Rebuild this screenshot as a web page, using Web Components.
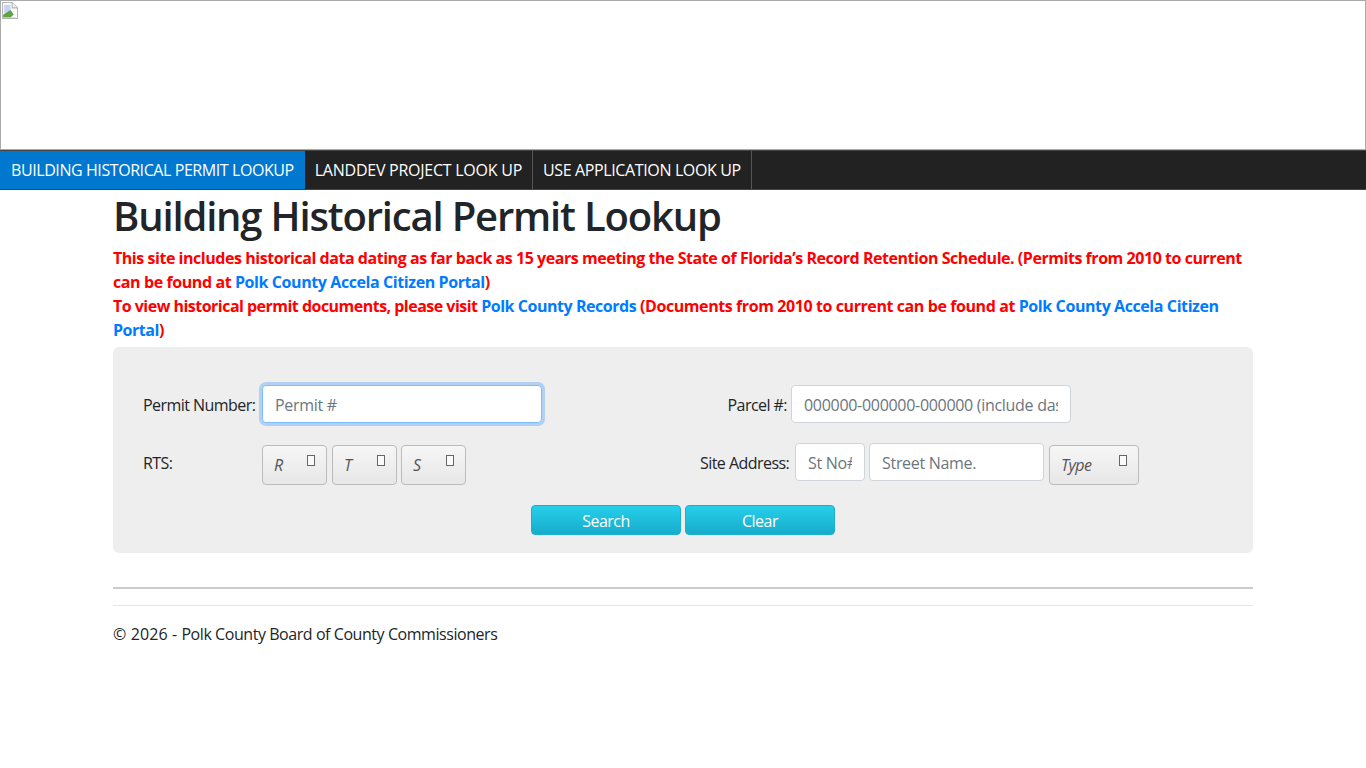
<!DOCTYPE html>
<html lang="en">
<head>
<meta charset="utf-8">
<title>Building Historical Permit Lookup</title>
<style>
    html, body { margin: 0; padding: 0; background: #fff; }
    body { font-family: "Open Sans", "Noto Sans", sans-serif; font-size: 16px; color: #212529; }
</style>
</head>
<body>
<site-banner></site-banner>
<site-nav>
    <nav-link active>BUILDING HISTORICAL PERMIT LOOKUP</nav-link>
    <nav-link style="letter-spacing:-0.25px">LANDDEV PROJECT LOOK UP</nav-link>
    <nav-link style="letter-spacing:-0.37px">USE APPLICATION LOOK UP</nav-link>
</site-nav>
<page-body>
    <h-title slot="title">Building Historical Permit Lookup</h-title>
    <notice-text slot="notice"></notice-text>
    <permit-form slot="form"></permit-form>
    <site-footer slot="footer"></site-footer>
</page-body>

<script>
class SiteBanner extends HTMLElement {
    connectedCallback() {
        this.attachShadow({ mode: 'open' });
        this.shadowRoot.innerHTML = `
            <style>
                :host { display: block; height: 150px; box-sizing: border-box; border: 1px solid #aaa; }
                svg { display: block; margin: 1px 0 0 0; }
            </style>
            <svg width="17" height="17" viewBox="0 0 16 16">
                <path d="M1.5 .5H10.5L15.5 5.5V15.5H1.5Z" fill="#fff" stroke="#b4b4b4"/>
                <path d="M10.5 .5V5.5H15.5" fill="#eee" stroke="#b4b4b4"/>
                <path d="M3 2.5H9V9L3 11Z" fill="#c5d4f3"/>
                <path d="M2 14.5V12L9 7.5L14 14.5Z" fill="#5ea548"/>
                <path d="M9 14.5L15 9V14.5Z" fill="#fff"/>
            </svg>
        `;
    }
}

class SiteNav extends HTMLElement {
    connectedCallback() {
        this.attachShadow({ mode: 'open' });
        this.shadowRoot.innerHTML = `
            <style>
                :host { display: flex; height: 40px; box-sizing: border-box; background: #222; border-top: 1px solid #444; border-bottom: 1px solid #444; }
            </style>
            <slot></slot>
        `;
    }
}

class NavLink extends HTMLElement {
    connectedCallback() {
        this.attachShadow({ mode: 'open' });
        this.shadowRoot.innerHTML = `
            <style>
                :host { display: flex; align-items: center; height: 38px; padding: 0 10px; color: #fff; border-right: 1px solid #555; font-size: 16px; white-space: nowrap; cursor: pointer; }
                :host([active]) { background: #0078d0; border-right: 0; padding: 0 11px; letter-spacing: -0.42px; }
            </style>
            <slot></slot>
        `;
    }
}

class PageBody extends HTMLElement {
    connectedCallback() {
        this.attachShadow({ mode: 'open' });
        this.shadowRoot.innerHTML = `
            <style>
                :host { display: block; width: 1140px; margin: 0 auto; }
            </style>
            <slot name="title"></slot>
            <slot name="notice"></slot>
            <slot name="form"></slot>
            <slot name="footer"></slot>
        `;
    }
}

class HTitle extends HTMLElement {
    connectedCallback() {
        this.attachShadow({ mode: 'open' });
        this.shadowRoot.innerHTML = `
            <style>
                :host { display: block; font-size: 40px; font-weight: 600; line-height: 48px; height: 56px; padding-top: 2px; box-sizing: border-box; color: #212529; letter-spacing: -1.17px; white-space: nowrap; }
            </style>
            <slot></slot>
        `;
    }
}

class NoticeText extends HTMLElement {
    connectedCallback() {
        this.attachShadow({ mode: 'open' });
        this.shadowRoot.innerHTML = `
            <style>
                :host { display: block; font-size: 16px; font-weight: 700; line-height: 24px; color: #f00; letter-spacing: -0.455px; height: 101px; }
                div { height: 24px; white-space: nowrap; }
                a { color: #007bff; text-decoration: none; }
                .tight { letter-spacing: -0.52px; }
                .loose { letter-spacing: -0.41px; }
            </style>
            <div>This site includes historical data dating as far back as 15 years meeting the State of Florida’s Record Retention Schedule. (Permits from 2010 to current</div>
            <div class="loose">can be found at <a href="#">Polk County Accela Citizen Portal</a>)</div>
            <div><span class="tight">To view historical permit documents, please visit </span><a href="#">Polk County Records</a> <span class="loose">(Documents from 2010 to current can be found at <a href="#">Polk County Accela Citizen</a></span></div>
            <div><a href="#">Portal</a>)</div>
        `;
    }
}

class TextField extends HTMLElement {
    connectedCallback() {
        const ph = this.getAttribute('placeholder') || '';
        this.attachShadow({ mode: 'open' });
        this.shadowRoot.innerHTML = `
            <style>
                :host { display: block; flex: none; width: var(--w, 280px); height: var(--h, 38px); }
                input { display: block; box-sizing: border-box; width: 100%; height: 100%; padding: 7px 12px 5px; border: 1px solid #ced4da; border-radius: 4px; background: #fff; font: inherit; letter-spacing: -0.3px; color: #495057; outline: 0; }
                input::placeholder { color: #6c757d; opacity: 1; }
                :host([focused]) input { border-color: #80bdff; box-shadow: 0 0 0 3px rgba(0,123,255,.25); }
            </style>
            <input type="text" placeholder="${ph}">
        `;
    }
}

class DropSelect extends HTMLElement {
    connectedCallback() {
        this.attachShadow({ mode: 'open' });
        this.shadowRoot.innerHTML = `
            <style>
                :host { display: block; flex: none; position: relative; box-sizing: border-box; width: var(--w, 65px); height: 40px; border: 1px solid #bbb; border-radius: 4px; background: linear-gradient(#f6f6f6, #e7e7e7); color: #555; cursor: pointer; }
                span { display: block; padding: 7px 0 0 11px; font-style: italic; line-height: 24px; }
                i { position: absolute; top: 9px; right: 11px; width: 6px; height: 9px; border: 1px solid #666; background: #fafafa; }
            </style>
            <span><slot></slot></span><i></i>
        `;
    }
}

class ActionButton extends HTMLElement {
    connectedCallback() {
        this.attachShadow({ mode: 'open' });
        this.shadowRoot.innerHTML = `
            <style>
                :host { display: block; }
                button { display: block; box-sizing: border-box; width: 150px; height: 30px; padding: 1px 0 0; border: 1px solid #1ab0cf; border-radius: 4px; background: linear-gradient(#27cfea, #16accb); color: #fff; font: inherit; letter-spacing: inherit; cursor: pointer; }
            </style>
            <button><slot></slot></button>
        `;
    }
}

class PermitForm extends HTMLElement {
    connectedCallback() {
        this.attachShadow({ mode: 'open' });
        this.shadowRoot.innerHTML = `
            <style>
                :host { display: block; box-sizing: border-box; height: 206px; padding: 38px 30px 0; background: #eee; border-radius: 6px; letter-spacing: -0.55px; }
                .row { display: flex; align-items: flex-start; }
                .row1 { height: 58px; }
                .row2 { height: 62px; }
                .left { width: 119px; flex: none; }
                .lab { line-height: 40px; white-space: nowrap; }
                .col2 { flex: none; width: 280px; display: flex; gap: 4px; }
                .right { display: flex; gap: 4px; margin-left: 158px; }
                .row1 .right { width: 371px; justify-content: flex-end; }
                .row2 .right .lab { width: 91px; }
                .row2 .col2 { padding-top: 2px; }
                .sel { margin: 2px 0 0 1px; }
                .btns { display: flex; justify-content: center; gap: 4px; }
            </style>
            <div class="row row1">
                <div class="left lab">Permit Number:</div>
                <div class="col2"><text-field focused placeholder="Permit #"></text-field></div>
                <div class="right">
                    <div class="lab">Parcel #:</div>
                    <text-field placeholder="000000-000000-000000 (include dashes)"></text-field>
                </div>
            </div>
            <div class="row row2">
                <div class="left lab">RTS:</div>
                <div class="col2">
                    <drop-select>R</drop-select>
                    <drop-select style="margin-left:1px">T</drop-select>
                    <drop-select>S</drop-select>
                </div>
                <div class="right">
                    <div class="lab">Site Address:</div>
                    <text-field style="--w:70px" placeholder="St No#"></text-field>
                    <text-field style="--w:175px" placeholder="Street Name."></text-field>
                    <drop-select class="sel" style="--w:90px">Type</drop-select>
                </div>
            </div>
            <div class="btns">
                <action-button>Search</action-button>
                <action-button>Clear</action-button>
            </div>
        `;
    }
}

class SiteFooter extends HTMLElement {
    connectedCallback() {
        this.attachShadow({ mode: 'open' });
        this.shadowRoot.innerHTML = `
            <style>
                :host { display: block; padding-top: 34px; letter-spacing: -0.44px; }
                .thick { height: 2px; background: #ccc; }
                .thin { height: 1px; background: #e5e5e5; margin-top: 16px; }
                p { margin: 0; padding-top: 16px; line-height: 24px; }
                span { letter-spacing: 0.1px; }
            </style>
            <div class="thick"></div>
            <div class="thin"></div>
            <p><span>© 2026 - </span>Polk County Board of County Commissioners</p>
        `;
    }
}

customElements.define('site-banner', SiteBanner);
customElements.define('site-nav', SiteNav);
customElements.define('nav-link', NavLink);
customElements.define('page-body', PageBody);
customElements.define('h-title', HTitle);
customElements.define('notice-text', NoticeText);
customElements.define('text-field', TextField);
customElements.define('drop-select', DropSelect);
customElements.define('action-button', ActionButton);
customElements.define('permit-form', PermitForm);
customElements.define('site-footer', SiteFooter);
</script>
</body>
</html>
